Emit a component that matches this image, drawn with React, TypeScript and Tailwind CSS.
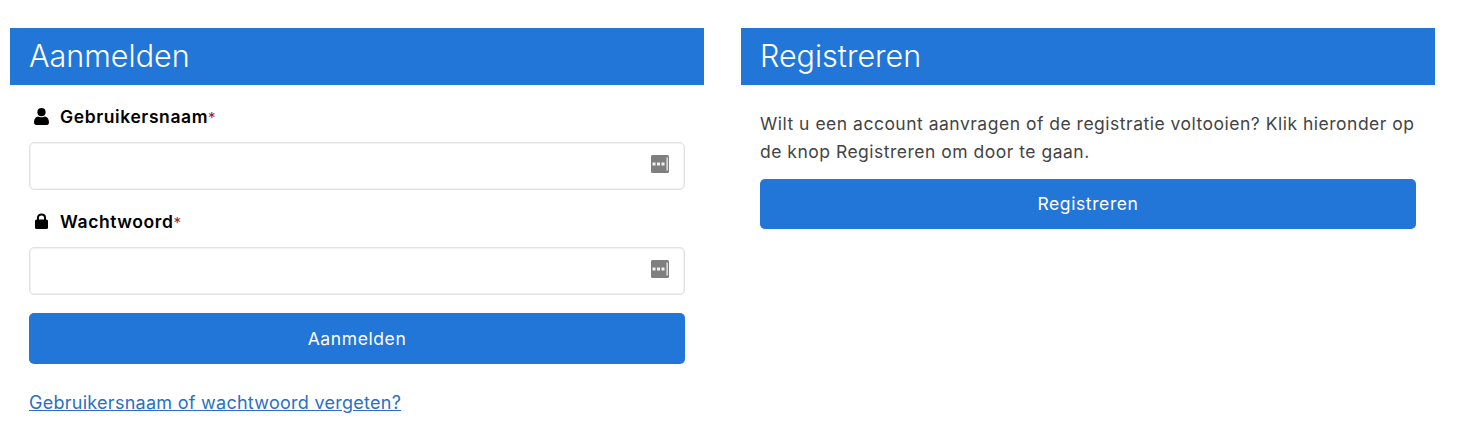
const F = "font-['Inter','Noto_Sans',sans-serif]";

function PassIcon() {
  return (
    <svg width="18" height="18" viewBox="0 0 18 18" className="absolute right-[15px] top-[12px]">
      <rect x="0" y="0" width="18" height="18" rx="1.5" fill="#7f7f7f" />
      <rect x="1.5" y="7.5" width="3" height="3" fill="#f2f2f2" />
      <rect x="6" y="7.5" width="3" height="3" fill="#f2f2f2" />
      <rect x="10.5" y="7.5" width="3" height="3" fill="#f2f2f2" />
      <rect x="15.5" y="2.5" width="1.3" height="13" fill="#f2f2f2" />
    </svg>
  );
}

function UserIcon() {
  return (
    <svg width="15" height="17" viewBox="0 0 15 17">
      <circle cx="7.5" cy="4.2" r="4.1" fill="#000" />
      <path d="M0 14.5C0 10.5 2 8.8 4 8.4C5.5 9.4 9.5 9.4 11 8.4C13 8.8 15 10.5 15 14.5C15 16 14 17 13 17H2C1 17 0 16 0 14.5Z" fill="#000" />
    </svg>
  );
}

function LockIcon() {
  return (
    <svg width="13" height="16" viewBox="0 0 13 16">
      <path d="M3 7V4.5C3 2.6 4.6 1.4 6.5 1.4C8.4 1.4 10 2.6 10 4.5V7" fill="none" stroke="#000" strokeWidth="2" />
      <rect x="0" y="6.5" width="13" height="9.5" rx="1.5" fill="#000" />
    </svg>
  );
}

function Field({ label, icon }: { label: string; icon: React.ReactNode }) {
  return (
    <div className="mb-[20px] last:mb-[18px]">
      <div className="flex items-center h-[24px] mb-[13px]">
        <span className="w-[31px] pl-[5px] -translate-y-[1px]">
          <span className="w-[15px] flex items-center justify-center">{icon}</span>
        </span>
        <span className="text-[17.5px] font-semibold text-black tracking-[0.6px] pt-[1px]">
          {label}
          <span className="text-[#9b1c3a] font-normal text-[15px] tracking-normal">*</span>
        </span>
      </div>
      <div className="relative h-[48px] rounded-[5px] border border-[#e2e2e2] shadow-[inset_0_0_0_1px_#f2f2f2] bg-white">
        <PassIcon />
      </div>
    </div>
  );
}

function Header({ children }: { children: React.ReactNode }) {
  return (
    <div className="h-[57px] bg-[#2276d7] pl-[19px] pb-[1px] flex items-center text-white text-[30.5px] font-light">
      {children}
    </div>
  );
}

function Btn({ children, h }: { children: React.ReactNode; h: string }) {
  return (
    <div className={`${h} rounded-[5px] bg-[#2276d7] flex items-center justify-center text-white text-[17.5px] tracking-[0.6px]`}>
      {children}
    </div>
  );
}

export default function App() {
  return (
    <div className={`${F} w-[1474px] h-[432px] bg-white overflow-hidden pt-[28px] pl-[10px] grid grid-cols-[694px_694px] gap-x-[37px] items-start`}>
      <div>
        <Header>Aanmelden</Header>
        <div className="px-[19px] pt-[20px]">
          <div>
            <Field label="Gebruikersnaam" icon={<UserIcon />} />
            <Field label="Wachtwoord" icon={<LockIcon />} />
          </div>
          <Btn h="h-[51px] pt-[1px]">Aanmelden</Btn>
          <a className="block mt-[26px] text-[18px] leading-[26px] text-[#2a6fc4] underline tracking-[0.27px]">
            Gebruikersnaam of wachtwoord vergeten?
          </a>
        </div>
      </div>
      <div>
        <Header>Registreren</Header>
        <div className="px-[19px] pt-[25px]">
          <p className="text-[17.5px] leading-[28px] text-[#444444] mb-[13px] tracking-[0.5px]">
            Wilt u een account aanvragen of de registratie voltooien? Klik hieronder op de knop Registreren om door te gaan.
          </p>
          <Btn h="h-[50px]">Registreren</Btn>
        </div>
      </div>
    </div>
  );
}
